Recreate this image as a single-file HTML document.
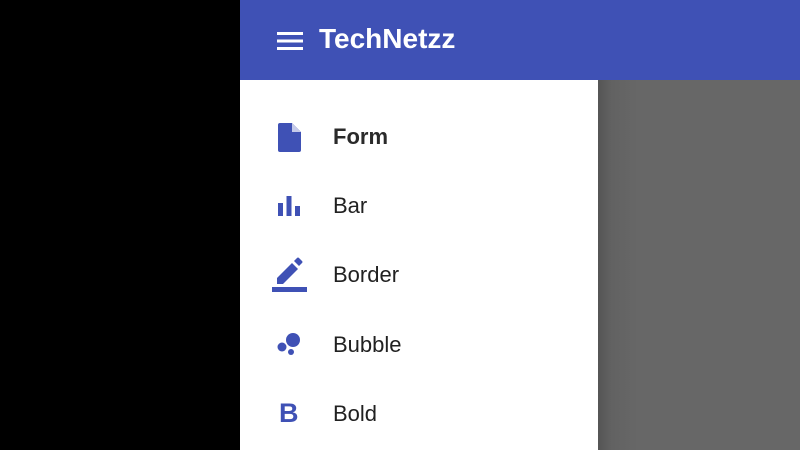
<!DOCTYPE html>
<html><head><style>
html,body{margin:0;padding:0;width:800px;height:450px;overflow:hidden;background:#000;font-family:"Liberation Sans",Roboto,sans-serif;}
.hdr{position:absolute;left:240px;top:0;width:560px;height:80px;background:#3f51b5;}
.gray{position:absolute;left:598px;top:80px;width:202px;height:370px;background:linear-gradient(to right,#555 0px,#626262 14px,#676767 40px,#676767 100%);}
.drawer{position:absolute;left:240px;top:80px;width:358px;height:370px;background:#fff;}
.title{position:absolute;left:319px;top:23px;color:#fff;font-weight:bold;font-size:28px;letter-spacing:0px;}
.item{position:absolute;left:333px;font-size:22px;color:#212121;}
svg{position:absolute;}
</style></head><body>
<div class="hdr"></div>
<div class="gray"></div>
<div class="drawer"></div>
<svg style="left:277px;top:31px" width="26" height="20"><rect x="0" y="1" width="26" height="3" fill="#fff"/><rect x="0" y="8.5" width="26" height="3" fill="#fff"/><rect x="0" y="16" width="26" height="3" fill="#fff"/></svg>
<div class="title">TechNetzz</div>

<svg style="left:278px;top:123px" width="24" height="30"><path d="M2 0H14L23 9V27Q23 29 21 29H2Q0 29 0 27V2Q0 0 2 0Z" fill="#3f51b5"/><path d="M14 0V9H23Z" fill="#c5cae9"/></svg>
<div class="item" style="top:124px;font-weight:bold;color:#2a2a2a">Form</div>

<svg style="left:278px;top:196px" width="24" height="22"><rect x="0" y="7" width="5" height="13" fill="#3f51b5"/><rect x="8.5" y="0" width="5" height="20" fill="#3f51b5"/><rect x="17" y="10" width="5" height="10" fill="#3f51b5"/></svg>
<div class="item" style="top:193px">Bar</div>

<svg style="left:272px;top:257px" width="36" height="36"><path d="M5 27V21L20 6L26 12L11 27Z" fill="#3f51b5"/><path d="M22 4L25 1Q26 0 27 1L30 4Q31 5 30 6L27 9Z" fill="#3f51b5"/><rect x="0" y="30" width="35" height="5" fill="#3f51b5"/></svg>
<div class="item" style="top:262px">Border</div>

<svg style="left:277px;top:332px" width="26" height="26"><circle cx="5" cy="15" r="4.5" fill="#3f51b5"/><circle cx="16" cy="8" r="7" fill="#3f51b5"/><circle cx="14" cy="20" r="3" fill="#3f51b5"/></svg>
<div class="item" style="top:332px">Bubble</div>

<div style="position:absolute;left:279px;top:398px;font-size:27px;font-weight:bold;color:#3f51b5">B</div>
<div class="item" style="top:401px">Bold</div>
</body></html>
